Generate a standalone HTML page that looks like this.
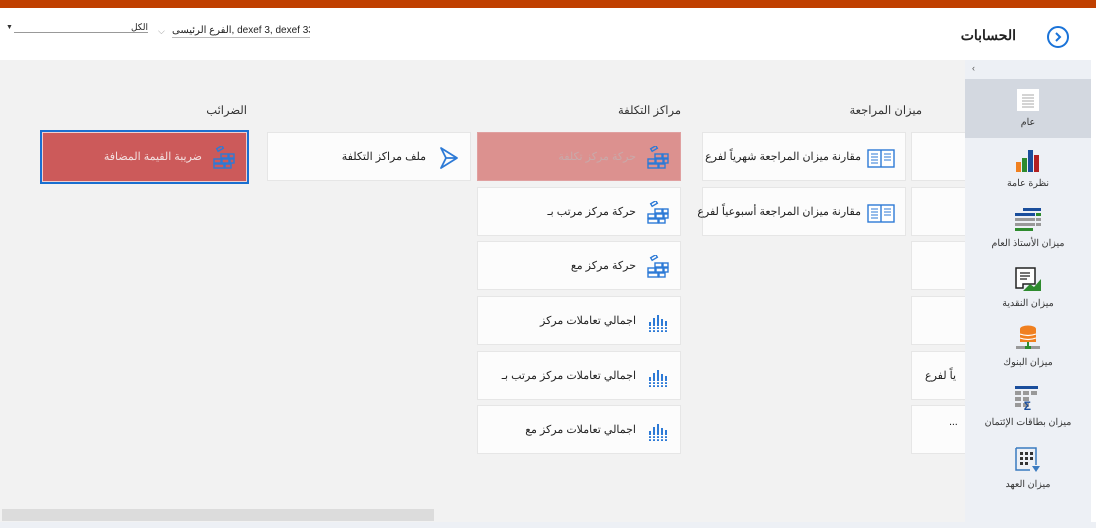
<!DOCTYPE html>
<html><head><meta charset="utf-8"><style>
*{margin:0;padding:0;box-sizing:border-box}
body{width:1096px;height:528px;overflow:hidden;background:#fff;position:relative;font-family:"Liberation Sans","Noto Sans CJK SC",sans-serif;color:#333}
.a{position:absolute}
.top{left:0;top:0;width:1096px;height:8px;background:#c04000}
.content{left:0;top:60px;width:965px;height:462px;background:#f2f2f2}
.side{left:965px;top:60px;width:126px;height:462px;background:#edf0f5}
.tile{position:absolute;width:204px;height:49px;background:#fcfcfc;border:1px solid #e6e6e6;direction:rtl;font-size:11px;color:#222;letter-spacing:-0.2px}
.tile svg{position:absolute;right:10px;top:13px}
.tile span{position:absolute;right:44px;top:17px;white-space:nowrap}
.h{font-size:11.5px;color:#333;direction:rtl;white-space:nowrap}
.si{position:absolute;left:965px;width:126px;text-align:center;font-size:9.5px;color:#333;direction:rtl}
.si svg{display:block;margin:0 auto 6px}
</style></head><body>
<div class="a top"></div>
<div class="a" style="left:1047px;top:26px;width:22px;height:22px;border:2px solid #1a73d8;border-radius:50%"></div>
<svg class="a" style="left:1053px;top:31px" width="10" height="12"><path d="M3 2 L7 6 L3 10" fill="none" stroke="#1a73d8" stroke-width="2"/></svg>
<div class="a" style="left:960px;top:27px;width:56px;text-align:right;font-size:14px;font-weight:bold;color:#222">الحسابات</div>
<div class="a" style="left:172px;top:25px;width:138px;border-bottom:1px solid #bbb;height:13px;font-size:10px;color:#222;text-align:right;white-space:nowrap;overflow:hidden">الفرع الرئيسى, dexef 3, dexef 33</div>
<div class="a" style="left:158px;top:26px;font-size:9px;color:#999">⌵</div>
<div class="a" style="left:14px;top:22px;width:134px;border-bottom:1px solid #999;height:11px;font-size:9px;color:#222;text-align:right">الكل</div>
<div class="a" style="left:6px;top:24px;font-size:7px">▼</div>

<div class="a content"></div>
<div class="a side"></div>
<div class="a" style="left:1091px;top:60px;width:5px;height:462px;background:#fff"></div>
<div class="a" style="left:0;top:522px;width:1096px;height:6px;background:#edf0f5"></div>
<div class="a" style="left:2px;top:509px;width:432px;height:12px;background:#dcdcdc"></div>
<div class="a" style="left:972px;top:63px;font-size:9px;color:#555">‹</div>
<div class="a" style="left:965px;top:79px;width:126px;height:59px;background:#d3d8e0"></div>
<div class="si" style="top:89px"><svg width="22" height="22"><rect width="22" height="22" fill="#fff"/><g stroke="#bbb" stroke-width="1.3"><path d="M5 6H17M5 9H17M5 12H17M5 15H17M5 18H17"/></g></svg>عام</div>
<div class="si" style="top:148px"><svg width="26" height="24"><rect x="1" y="14" width="5" height="10" fill="#f08020"/><rect x="7" y="10" width="5" height="14" fill="#2e8b2e"/><rect x="13" y="2" width="5" height="22" fill="#1a4e9c"/><rect x="19" y="7" width="5" height="17" fill="#b22020"/></svg>نظرة عامة</div>
<div class="si" style="top:208px"><svg width="28" height="24"><rect x="9" y="0" width="18" height="3" fill="#1a4e9c"/><rect x="1" y="5" width="20" height="3" fill="#1a4e9c"/><rect x="22" y="5" width="5" height="3" fill="#2e8b2e"/><rect x="1" y="10" width="20" height="3" fill="#999"/><rect x="22" y="10" width="5" height="3" fill="#999"/><rect x="1" y="15" width="20" height="3" fill="#999"/><rect x="22" y="15" width="5" height="3" fill="#999"/><rect x="1" y="20" width="18" height="3" fill="#2e8b2e"/></svg>ميزان الأستاذ العام</div>
<div class="si" style="top:266px"><svg width="28" height="26"><path d="M2 2H21V18H9V22H2Z" fill="#fff" stroke="#222" stroke-width="1.5"/><path d="M6 7H16M6 10H16M6 13H13" stroke="#222" stroke-width="1.3"/><path d="M9 25L16 18L20 21L27 13V25Z" fill="#2e8b2e"/></svg>ميزان النقدية</div>
<div class="si" style="top:325px"><svg width="28" height="26"><ellipse cx="14" cy="4" rx="8" ry="3.5" fill="#f08020"/><rect x="6" y="4" width="16" height="13" fill="#f08020"/><path d="M6 9Q14 12 22 9M6 13Q14 16 22 13" stroke="#fff" stroke-width="1.2" fill="none"/><path d="M14 17V21" stroke="#2e8b2e" stroke-width="2"/><rect x="2" y="21" width="24" height="3" fill="#999"/><rect x="11" y="21" width="6" height="3" fill="#2e8b2e"/></svg>ميزان البنوك</div>
<div class="si" style="top:385px"><svg width="28" height="26"><rect x="1" y="1" width="23" height="3" fill="#1a4e9c"/><g fill="#999"><rect x="1" y="6" width="6" height="4"/><rect x="9" y="6" width="6" height="4"/><rect x="17" y="6" width="6" height="4"/><rect x="1" y="12" width="6" height="4"/><rect x="9" y="12" width="6" height="4"/><rect x="1" y="18" width="6" height="4"/><rect x="9" y="18" width="6" height="4"/></g><text x="17" y="25" font-size="12" font-weight="bold" fill="#1a4e9c" font-family="Liberation Sans">Σ</text></svg>ميزان بطاقات الإئتمان</div>
<div class="si" style="top:447px"><svg width="28" height="26"><path d="M2 1H22V18" fill="none" stroke="#3a7ac0" stroke-width="1.5"/><path d="M2 1V23H16" fill="none" stroke="#3a7ac0" stroke-width="1.5"/><g fill="#333"><rect x="6" y="5" width="3" height="3"/><rect x="11" y="5" width="3" height="3"/><rect x="16" y="5" width="3" height="3"/><rect x="6" y="10" width="3" height="3"/><rect x="11" y="10" width="3" height="3"/><rect x="16" y="10" width="3" height="3"/><rect x="6" y="15" width="3" height="3"/><rect x="11" y="15" width="3" height="3"/></g><path d="M18 19L22 25L26 19Z" fill="#3a7ac0"/></svg>ميزان العهد</div>

<div class="a h" style="right:174px;top:103px">ميزان المراجعة</div>
<div class="a h" style="right:415px;top:103px">مراكز التكلفة</div>
<div class="a h" style="right:849px;top:103px">الضرائب</div>

<div class="a" style="left:911px;top:60px;width:54px;height:462px;overflow:hidden">
<div class="tile" style="left:0;top:72px"></div>
<div class="tile" style="left:0;top:127px"></div>
<div class="tile" style="left:0;top:181px"></div>
<div class="tile" style="left:0;top:236px"></div>
<div class="tile" style="left:0;top:291px"><span style="right:auto;left:13px">ياً لفرع</span></div>
<div class="tile" style="left:0;top:345px"><span style="right:auto;left:37px;top:10px">...</span></div>
</div>

<svg width="0" height="0" style="position:absolute"><defs>
<g id="bk" fill="none" stroke="#2d7ad6" stroke-width="1.4"><rect x="5" y="1" width="6" height="3" transform="rotate(-30 8 2.5)"/><rect x="9" y="8" width="7" height="4"/><rect x="17" y="8" width="5" height="4"/><rect x="2" y="13" width="7" height="4"/><rect x="10" y="13" width="7" height="4"/><rect x="18" y="13" width="4" height="4"/><rect x="2" y="18" width="10" height="4"/><rect x="13" y="18" width="6" height="4"/></g>
<g id="bar" fill="#2d7ad6"><rect x="3" y="12" width="2" height="10"/><rect x="7" y="8" width="2" height="14"/><rect x="11" y="5" width="2" height="17"/><rect x="15" y="9" width="2" height="13"/><rect x="19" y="11" width="2" height="11"/><rect x="2" y="16" width="20" height="1.2" fill="#fff"/><rect x="2" y="19" width="20" height="1.2" fill="#fff"/></g>
<g id="bkk"><rect x="1" y="4" width="26" height="17" fill="#fff" stroke="#2d7ad6" stroke-width="1.4"/><path d="M14 4V21" stroke="#2d7ad6" stroke-width="1.4"/><g stroke="#2d7ad6" stroke-width="1"><path d="M4 8H11M4 11H11M4 14H11M4 17H11M17 8H24M17 11H24M17 14H24"/></g></g>
</defs></svg>

<div class="tile" style="left:702px;top:132px"><svg width="28" height="24"><use href="#bkk"/></svg><span>مقارنة ميزان المراجعة شهرياً لفرع</span></div>
<div class="tile" style="left:702px;top:187px"><svg width="28" height="24"><use href="#bkk"/></svg><span>مقارنة ميزان المراجعة أسبوعياً لفرع</span></div>
<div class="tile" style="left:477px;top:132px;background:#dc918f;border-color:#e0a0a0"><svg width="24" height="24"><use href="#bk"/></svg><span style="color:#c8aaaa">حركة مركز تكلفة</span></div>
<div class="tile" style="left:477px;top:187px"><svg width="24" height="24"><use href="#bk"/></svg><span>حركة مركز مرتب بـ</span></div>
<div class="tile" style="left:477px;top:241px"><svg width="24" height="24"><use href="#bk"/></svg><span>حركة مركز مع</span></div>
<div class="tile" style="left:477px;top:296px"><svg width="24" height="24"><use href="#bar"/></svg><span>اجمالي تعاملات مركز</span></div>
<div class="tile" style="left:477px;top:351px"><svg width="24" height="24"><use href="#bar"/></svg><span>اجمالي تعاملات مركز مرتب بـ</span></div>
<div class="tile" style="left:477px;top:405px"><svg width="24" height="24"><use href="#bar"/></svg><span>اجمالي تعاملات مركز مع</span></div>
<div class="tile" style="left:267px;top:132px"><svg width="24" height="24"><path d="M5 2L21 12L5 22L10 12Z M10 12H21" fill="none" stroke="#2d7ad6" stroke-width="1.8" stroke-linejoin="round"/></svg><span>ملف مراكز التكلفة</span></div>
<div class="a" style="left:40px;top:130px;width:209px;height:54px;border:2px solid #1a6fd0"></div>
<div class="tile" style="left:42px;top:132px;width:205px;height:50px;background:#cc5a5a;border:1px solid #f0d0d0"><svg width="24" height="24"><use href="#bk"/></svg><span style="color:#f3e0e0">ضريبة القيمة المضافة</span></div>
</body></html>
